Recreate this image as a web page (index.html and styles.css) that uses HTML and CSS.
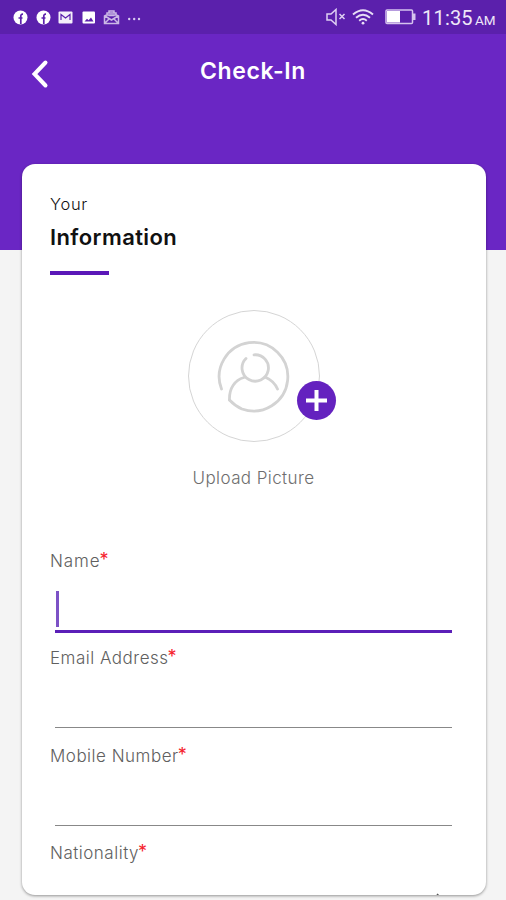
FILE: index.html
```
<!DOCTYPE html>
<html lang="en">
<head>
  <meta charset="UTF-8">
  <meta name="viewport" content="width=device-width, initial-scale=1.0">
  <title>Check-In</title>
  <link rel="stylesheet" href="styles.css">
</head>
<body>
  <header class="header">
    <div class="status-bar">
      <div class="notifications">
        <svg width="15" height="15" viewBox="0 0 15 15"><circle cx="7.5" cy="7.5" r="7" fill="#fff"/><path d="M7.8 14V6q0-2 2.2-1.8M5.5 8h4" fill="none" stroke="#5b20ac" stroke-width="1.7"/></svg>
        <svg width="15" height="15" viewBox="0 0 15 15"><circle cx="7.5" cy="7.5" r="7" fill="#fff"/><path d="M7.8 14V6q0-2 2.2-1.8M5.5 8h4" fill="none" stroke="#5b20ac" stroke-width="1.7"/></svg>
        <svg width="15" height="15" viewBox="0 0 15 15"><rect x=".5" y="1.5" width="14" height="12" rx="1" fill="#f4effa"/><path d="M3 10V4.500l4.500 3.500L12 4.500V10" fill="none" stroke="#5b20ac" stroke-width="1.2"/></svg>
        <svg width="15" height="15" viewBox="0 0 15 15"><rect x="1.5" y="1.5" width="12.5" height="12" rx="1" fill="#fff"/><path d="M3.500 11.500L6 8.700l1.600 1.500L10 7.500l2.500 4z" fill="#5b20ac"/></svg>
        <svg width="17" height="15" viewBox="0 0 17 15" fill="none" stroke="#cbb8e6" stroke-width="1.5"><path d="M4 5V3h9v2M6 3V1h5v2M1.500 6l2-1h10l2 1v7.500h-14zM2 6l6.500 4L15 6M2 13l4-4M15 13l-4-4M5.500 5.500h6"/></svg>
        <svg width="15" height="15" viewBox="0 0 15 15" fill="#d9caf0"><circle cx="1.200" cy="9" r="1.200"/><circle cx="6.200" cy="9" r="1.200"/><circle cx="11" cy="9" r="1.200"/></svg>
      </div>
      <div class="system">
        <svg width="20" height="18" viewBox="0 0 20 18" fill="none" stroke="#ded0f2" stroke-width="1.500"><path d="M1 6h4l5-4.500v15L5 12H1zM13.500 6l5 5M18.500 6l-5 5"/></svg>
        <svg class="wifi" width="22" height="18" viewBox="0 0 22 18" fill="none" stroke="#e8def6" stroke-width="1.900"><path d="M1 6.500Q11-2 21 6.500M4 9.800q7-6 14 0M7.200 12.700q3.800-3.300 7.600 0"/><circle cx="11" cy="15.200" r="1.400" fill="#e8def6" stroke="none"/></svg>
        <svg class="battery" width="31" height="16" viewBox="0 0 31 16"><rect x="1" y="1" width="26.500" height="13.500" rx="1" fill="none" stroke="#d5c3ee" stroke-width="1.500"/><rect x="2" y="2" width="13" height="11.500" fill="#fff"/><path d="M28 4.500h2.500v6.500H28z" fill="#d5c3ee"/></svg>
        <span class="clock">11:35</span><span class="meridiem">AM</span>
      </div>
    </div>
    <div class="title-bar">
      <button class="back" aria-label="Back">
        <svg width="18" height="30" viewBox="0 0 18 30"><path d="M14.500 3.500L3.500 15l11 11.500" fill="none" stroke="#fff" stroke-width="4" stroke-linecap="round"/></svg>
      </button>
      <h1 class="title">Check-In</h1>
    </div>
  </header>

  <main class="card">
    <h2 class="heading"><span class="your">Your</span><span class="info">Information</span></h2>
    <div class="accent"></div>

    <div class="upload">
      <div class="avatar">
        <svg width="74" height="74" viewBox="0 0 74 74" fill="none" stroke="#d3d3d3" stroke-width="2.800" stroke-linecap="round">
          <path d="M4.500 49A34.300 34.300 0 1 1 25 69Q18 66 12.500 60"/>
          <path d="M12.500 60C12 48 18 40 27 37.500M49 37.500Q57 41 60.500 49"/>
          <path d="M29 18.500A13.200 13.200 0 1 0 37 14.800"/>
        </svg>
        <button class="add" aria-label="Add picture">
          <svg width="39" height="39" viewBox="0 0 39 39"><path d="M19.500 9v21M9 19.500h21" stroke="#fff" stroke-width="4"/></svg>
        </button>
      </div>
      <span class="upload-text">Upload Picture</span>
    </div>

    <form class="fields">
      <div class="field">
        <div class="label"><span class="name">Name</span><span class="star">*</span></div>
        <div class="input active"><span class="caret"></span></div>
      </div>
      <div class="field">
        <div class="label"><span class="email">Email Address</span><span class="star">*</span></div>
        <div class="input"></div>
      </div>
      <div class="field">
        <div class="label"><span class="mobile">Mobile Number</span><span class="star">*</span></div>
        <div class="input"></div>
      </div>
      <div class="field">
        <div class="label"><span class="nationality">Nationality</span><span class="star">*</span></div>
        <div class="input select">
          <svg width="16" height="9" viewBox="0 0 16 9"><path d="M1 1l3.500 3.500L8 8l3-3" fill="none" stroke="#555" stroke-width="1.500"/></svg>
        </div>
      </div>
    </form>
  </main>
</body>
</html>
```
FILE: styles.css
```
html, body {
margin: 0;
padding: 0;
}

body {
height: 900px;
overflow: hidden;
background-color: #f4f4f4;
font-family: Inter, "Open Sans", sans-serif;
}

svg {
display: block;
flex-shrink: 0;
}

button {
padding: 0;
border: 0;
background: none;
}

.header {
height: 250px;
background-color: #6a26c4;
}

.status-bar {
display: flex;
justify-content: space-between;
height: 34px;
box-sizing: border-box;
padding: 0 10px 0 13px;
background-color: #5b20ac;
}

.notifications {
display: flex;
align-items: center;
gap: 7.500px;
}

.system {
display: flex;
align-items: center;
color: #eee7f8;
font-family: Roboto, sans-serif;
}

.wifi {
margin-left: 6px;
}

.battery {
margin: 0 6px 0 11px;
}

.clock {
width: 50px;
padding-top: 2px;
font-size: 20px;
letter-spacing: .2px;
}

.meridiem {
width: 21px;
margin-left: 3px;
padding-top: 6px;
font-size: 13.500px;
}

.title-bar {
display: flex;
align-items: center;
height: 76px;
}

.back {
width: 18px;
margin: 3px 0 0 31px;
}

.title {
margin: -2px 0 0 151px;
color: #fff;
font-size: 23px;
font-weight: 600;
line-height: 30px;
letter-spacing: .6px;
white-space: nowrap;
}

.card {
width: 464px;
height: 731px;
box-sizing: border-box;
margin: -86px 0 0 22px;
padding: 27px 34px 0 28px;
border-radius: 13px;
background-color: #fff;
box-shadow: 0 1px 3px rgba(0, 0, 0, .4);
overflow: hidden;
}

.heading {
display: flex;
flex-direction: column;
align-items: flex-start;
margin: 0;
font-weight: 400;
color: #111;
}

.your {
font-size: 16.500px;
line-height: 26px;
font-weight: 300;
letter-spacing: .7px;
}

.info {
margin-top: 4px;
font-size: 22px;
line-height: 32px;
font-weight: 600;
letter-spacing: .4px;
}

.accent {
width: 59px;
height: 4px;
margin-top: 17.500px;
background-color: #5b17b8;
}

.upload {
display: flex;
flex-direction: column;
align-items: center;
width: 407px;
margin-top: 35px;
}

.avatar {
display: flex;
align-items: center;
justify-content: center;
position: relative;
width: 130px;
height: 130px;
border: 1px solid #d5d5d5;
border-radius: 50%;
}

.avatar > svg {
margin-top: 2px;
}

.add {
position: absolute;
right: -17px;
bottom: 21px;
width: 39px;
height: 39px;
border-radius: 50%;
background-color: #6422bf;
}

.upload-text {
margin-top: 23px;
color: #6e6e6e;
font-size: 17px;
line-height: 26px;
font-weight: 300;
letter-spacing: .4px;
}

.fields {
margin-top: 57.500px;
}

.field {
height: 97.300px;
}

.label {
display: flex;
height: 27px;
color: #606060;
font-size: 17px;
line-height: 26px;
font-weight: 300;
letter-spacing: .5px;
white-space: nowrap;
}

.name {
letter-spacing: .9px;
}

.star {
margin-left: -1px;
color: #f5222d;
font-size: 18px;
line-height: 23px;
font-weight: 400;
}

.input {
height: 55px;
margin: 0 0 0 5px;
border-bottom: 1px solid #888;
}

.active {
border-bottom: 3px solid #5b1fb8;
}

.caret {
display: block;
width: 3px;
height: 36px;
margin-left: 1px;
position: relative;
top: 16px;
background-color: #7c52c6;
}

.select {
display: flex;
justify-content: flex-end;
padding: 26px 0 0;
border: 0;
}
```
